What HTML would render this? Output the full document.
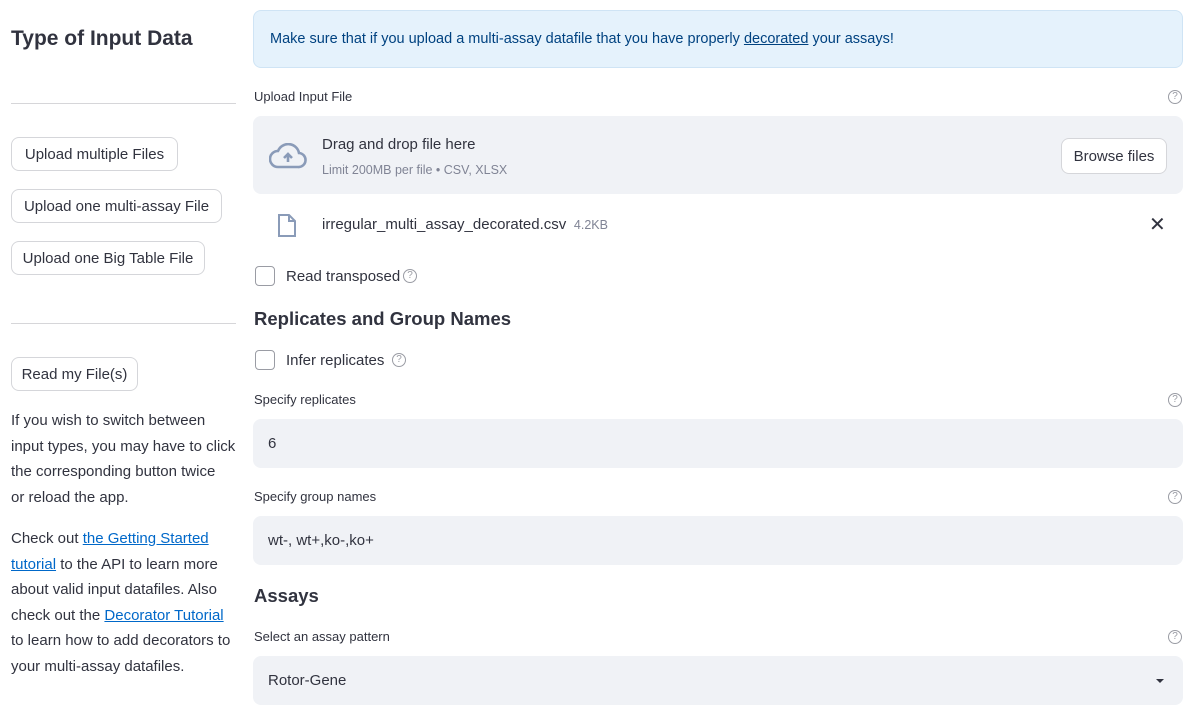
<!DOCTYPE html>
<html><head><style>
*{box-sizing:border-box;margin:0;padding:0}
body{width:1202px;height:723px;overflow:hidden;background:#fff;font-family:"Liberation Sans",sans-serif;color:#31333f;position:relative}
.a{position:absolute}
.btn{position:absolute;border:1px solid #d5d6da;border-radius:8px;background:#fff;font-size:15px;display:flex;align-items:center;justify-content:center;height:34px}
.hr{position:absolute;height:1px;background:#d6d6d9;left:11px;width:225px}
.p{font-size:15px;line-height:25.6px;white-space:nowrap}
a{color:#0068c9;text-decoration:underline}
.lbl{font-size:13px}
.q{position:absolute;width:14px;height:14px;border:1px solid #9a9ca4;border-radius:50%;font-size:10px;color:#9a9ca4;text-align:center;line-height:12px}
.inp{position:absolute;left:253px;width:930px;height:49px;background:#f0f2f6;border-radius:8px;font-size:15px;padding-left:15px;display:flex;align-items:center}
.cb{position:absolute;width:20px;height:20px;border:1px solid #9a9ca4;border-radius:4px;left:255px}
h3{position:absolute;font-size:18.5px;font-weight:bold}
</style></head><body>
<div class="a" style="left:11px;top:27px;font-size:21px;font-weight:bold">Type of Input Data</div>
<div class="hr" style="top:103px"></div>
<div class="btn" style="left:11px;top:137px;width:167px">Upload multiple Files</div>
<div class="btn" style="left:11px;top:189px;width:211px">Upload one multi-assay File</div>
<div class="btn" style="left:11px;top:241px;width:194px">Upload one Big Table File</div>
<div class="hr" style="top:323px"></div>
<div class="btn" style="left:11px;top:357px;width:127px">Read my File(s)</div>
<div class="a p" style="left:11px;top:408px">If you wish to switch between<br>input types, you may have to click<br>the corresponding button twice<br>or reload the app.</div>
<div class="a p" style="left:11px;top:526px">Check out <a>the Getting Started</a><br><a>tutorial</a> to the API to learn more<br>about valid input datafiles. Also<br>check out the <a>Decorator Tutorial</a><br>to learn how to add decorators to<br>your multi-assay datafiles.</div>

<div class="a" style="left:253px;top:10px;width:930px;height:58px;background:#e5f2fc;border:1px solid #cfe4f5;border-radius:8px;color:#004280;font-size:14.5px;padding:20px 16px">Make sure that if you upload a multi-assay datafile that you have properly <a style="color:#004280">decorated</a> your assays!</div>
<div class="a lbl" style="left:254px;top:89px">Upload Input File</div>
<div class="q" style="left:1168px;top:90px">?</div>
<div class="a" style="left:253px;top:116px;width:930px;height:78px;background:#f0f2f6;border-radius:8px"></div>
<svg class="a" style="left:269px;top:143px" width="38" height="26" viewBox="0 0 38 26"><path d="M9 24H29a7 7 0 0 0 1-14A11 11 0 0 0 9 8a8 8 0 0 0 0 16z" fill="none" stroke="#8a9bb8" stroke-width="2.6"/><path d="M19 19v-7M15 15l4-4 4 4" stroke="#8a9bb8" stroke-width="2.6" fill="none"/></svg>
<div class="a" style="left:322px;top:136px;font-size:15px">Drag and drop file here</div>
<div class="a" style="left:322px;top:163px;font-size:12.5px;color:#808495">Limit 200MB per file • CSV, XLSX</div>
<div class="btn" style="left:1061px;top:138px;width:106px;height:36px">Browse files</div>
<svg class="a" style="left:277px;top:213px" width="20" height="25" viewBox="0 0 20 25"><path d="M2 2h10l6 6v15H2z M12 2v6h6" fill="none" stroke="#8a9bb8" stroke-width="2"/></svg>
<div class="a" style="left:322px;top:216px;font-size:15px">irregular_multi_assay_decorated.csv <span style="font-size:12.5px;color:#808495">&nbsp;4.2KB</span></div>
<div class="a" style="left:1149px;top:212px;font-size:20px">✕</div>
<div class="cb" style="top:266px"></div>
<div class="a" style="left:286px;top:268px;font-size:15px">Read transposed</div>
<div class="q" style="left:403px;top:269px">?</div>
<h3 style="left:254px;top:308px">Replicates and Group Names</h3>
<div class="cb" style="top:350px"></div>
<div class="a" style="left:286px;top:352px;font-size:15px">Infer replicates</div>
<div class="q" style="left:392px;top:353px">?</div>
<div class="a lbl" style="left:254px;top:392px">Specify replicates</div>
<div class="q" style="left:1168px;top:393px">?</div>
<div class="inp" style="top:419px">6</div>
<div class="a lbl" style="left:254px;top:489px">Specify group names</div>
<div class="q" style="left:1168px;top:490px">?</div>
<div class="inp" style="top:516px">wt-, wt+,ko-,ko+</div>
<h3 style="left:254px;top:585px">Assays</h3>
<div class="a lbl" style="left:254px;top:629px">Select an assay pattern</div>
<div class="q" style="left:1168px;top:630px">?</div>
<div class="inp" style="top:656px">Rotor-Gene</div>
<div class="a" style="left:1156px;top:679px;width:0;height:0;border-left:4px solid transparent;border-right:4px solid transparent;border-top:4px solid #31333f"></div>
</body></html>
